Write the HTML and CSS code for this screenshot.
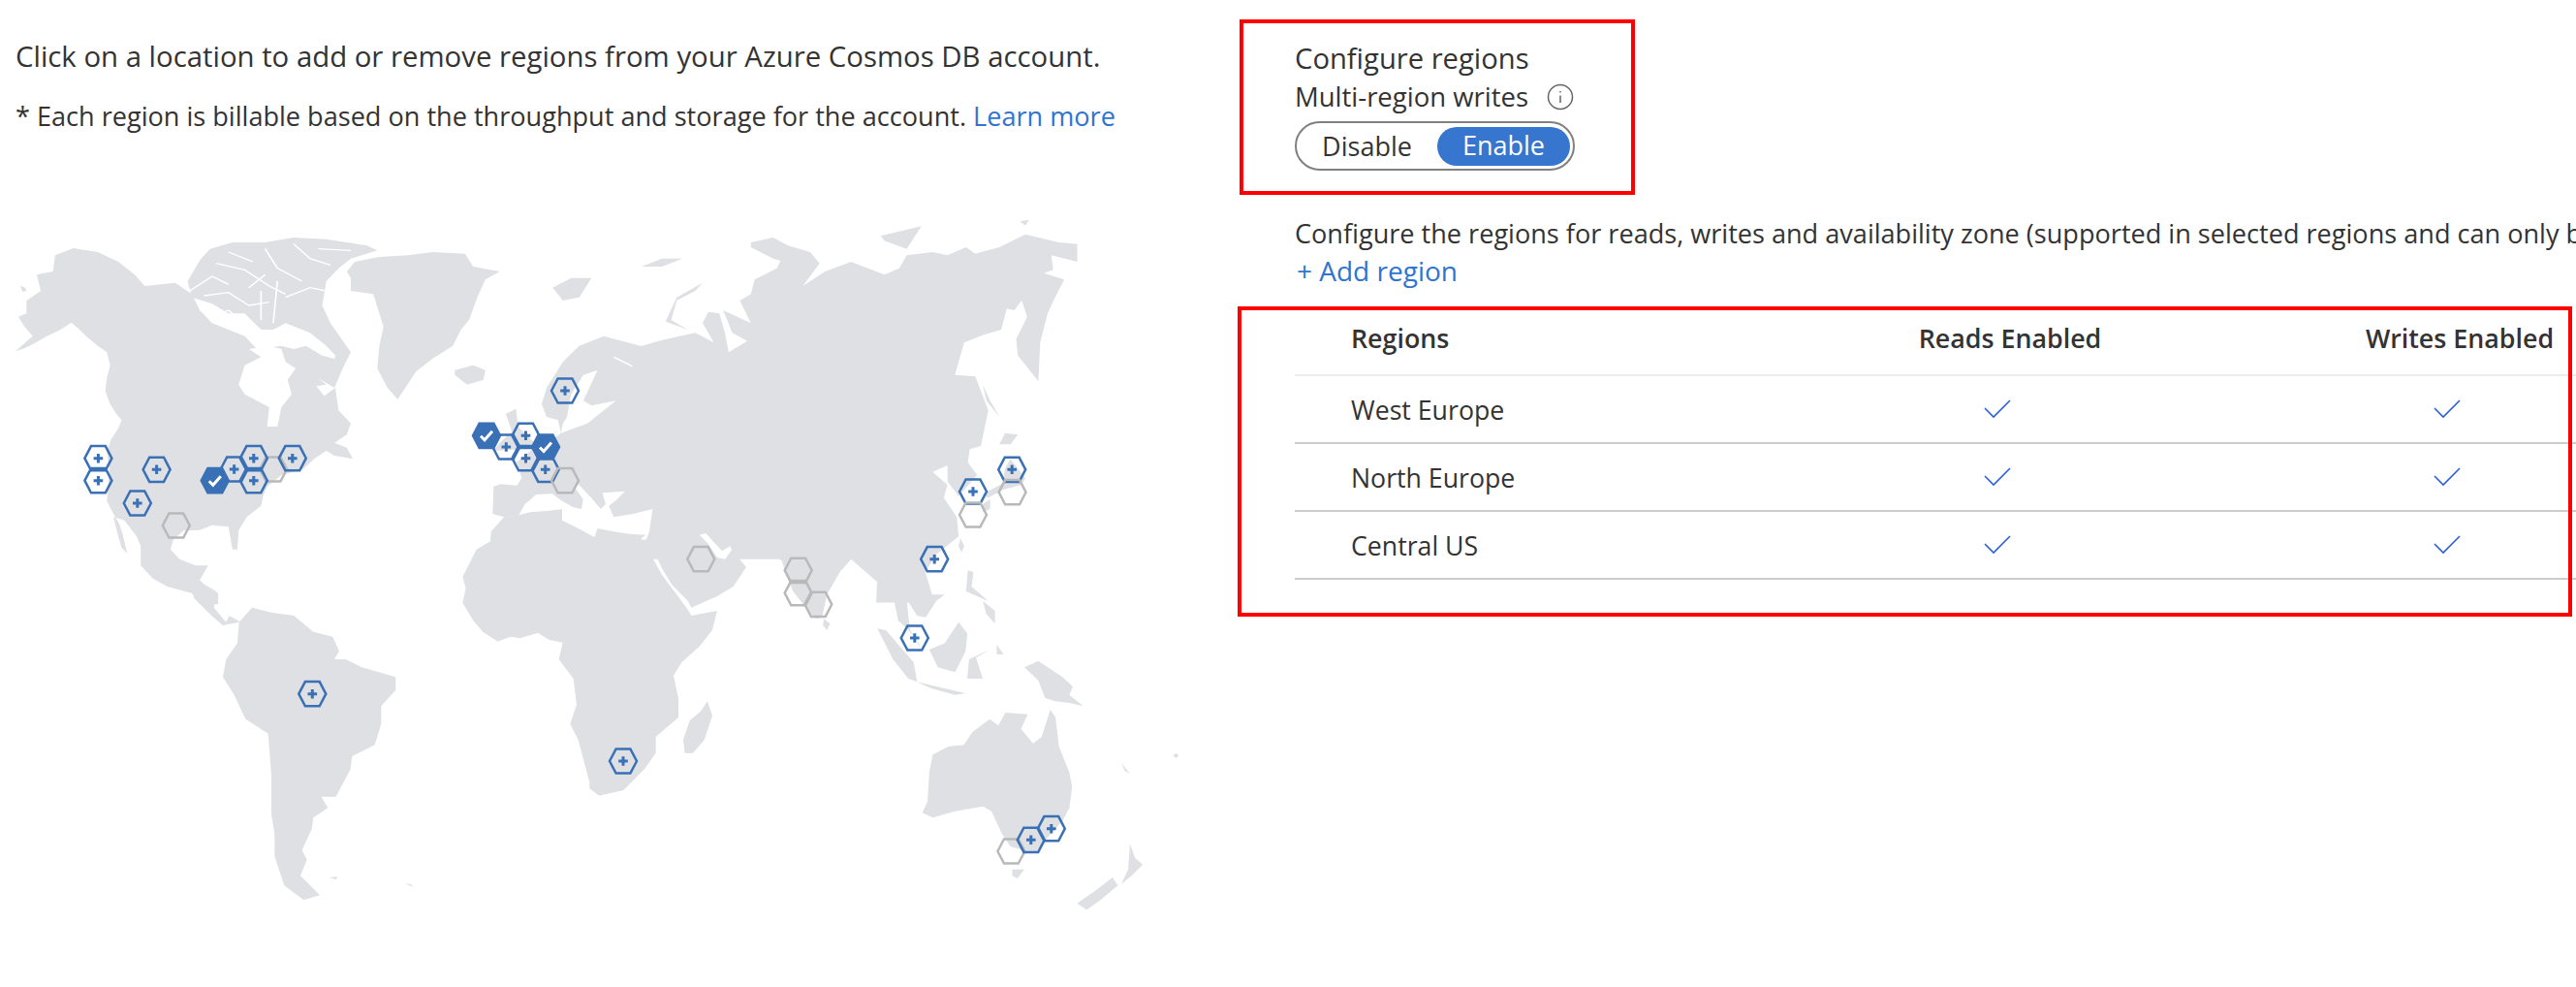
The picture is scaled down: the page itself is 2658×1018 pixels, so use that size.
FILE: index.html
```html
<!DOCTYPE html>
<html lang="en">
<head>
<meta charset="utf-8">
<title>Replicate data globally</title>
<link rel="stylesheet" href="styles.css">
</head>
<body>
<div class="page">
  <section class="left">
    <div class="intro">
      <p class="intro-line first">Click on a location to add or remove regions from your Azure Cosmos DB account.</p>
      <p class="intro-line second">* Each region is billable based on the throughput and storage for the account. <a class="link">Learn more</a></p>
    </div>
    <svg class="map" viewBox="0 200 1280 770" width="1280" height="770" aria-label="World map">
      <defs>
        <polygon id="hex" points="-14,0 -7.4,-12.6 7.4,-12.6 14,0 7.4,12.6 -7.4,12.6"/>
        <g id="plus" class="mk-plus"><use href="#hex"/><path class="mk-cross" d="M-4.8,0H4.8M0,-4.8V4.8"/></g>
        <g id="on" class="mk-on"><use href="#hex"/><path class="mk-check" d="M-6,.5L-2,4.5L6,-4.5"/></g>
        <use id="off" class="mk-off" href="#hex"/>
      </defs>

      <g transform="translate(0,200) scale(.4209,.3333)">
        <polygon class="land" points="38,487 60,478 85,462 115,440 145,422 175,398 195,420 215,445 240,470 262,490 270,530 262,570 258,610 270,650 285,680 298,700 290,725 272,760 262,800 268,850 265,900 262,950 278,990 292,1020 300,1050 312,1112 298,1095 288,1050 278,1000 305,1010 335,1060 345,1090 345,1150 375,1190 410,1215 470,1235 490,1270 535,1270 535,1235 505,1215 490,1195 510,1150 480,1150 440,1130 418,1100 425,1070 450,1042 490,1040 520,1025 560,1030 570,1100 582,1100 585,1040 605,1000 640,965 645,935 655,905 690,870 720,860 745,850 770,820 800,795 820,810 865,820 850,785 820,770 850,745 860,710 830,670 822,600 795,625 775,595 800,590 780,570 820,600 840,540 860,490 830,470 820,510 790,500 750,470 720,480 690,470 630,480 600,440 560,420 520,400 490,360 470,310 430,275 355,285 330,250 290,210 240,180 180,168 135,190 130,240 90,250 100,300 65,330 65,370 45,380 60,410 80,440"/>
        <polygon class="water" points="610,480 640,505 600,530 585,590 600,620 660,660 655,720 680,720 690,660 715,620 705,575 725,540 700,520 690,480 660,470"/>
        <polygon class="land" points="460,270 490,205 515,170 570,150 650,150 720,135 800,140 900,160 925,175 860,200 830,230 800,270 790,345 810,400 860,490 830,510 800,470 760,430 700,400 670,420 640,420 600,370 560,370 520,340 470,320"/>
        <polygon class="land" points="50,285 62,290 65,300 55,303"/>
        <path class="strait" d="M465,300L520,255L560,280M490,360L530,375L560,360L600,400L640,420M500,315L560,305L610,345L660,335M530,215L600,235L660,285L700,310M560,180L620,210M650,170L680,230L740,270M720,155L760,200L810,220M680,270L670,400M700,320L760,290L800,300M640,300L640,390M780,170L860,175M610,290L650,250M670,420L700,450"/>
        <polygon class="land" points="850,240 870,210 930,195 1000,190 1060,180 1140,185 1160,225 1225,240 1190,265 1170,320 1150,390 1130,420 1110,470 1060,510 1020,550 975,635 950,600 925,540 930,470 940,410 925,350 915,310 860,300 860,260"/>
        <polygon class="land" points="1115,545 1160,530 1190,545 1185,575 1145,590 1115,560"/>
        <polygon class="land" points="1355,290 1400,260 1450,260 1420,320 1380,330"/>
        <polygon class="land" points="1240,680 1265,665 1270,720 1310,770 1280,790 1210,795 1225,770 1255,735"/>
        <polygon class="land" points="1267,831 1290,810 1310,780 1345,770 1375,740 1368,700 1340,690 1328,650 1340,600 1380,520 1420,470 1480,440 1570,470 1650,470 1650,900 1300,900"/>
        <polygon class="water" points="1375,740 1440,710 1510,640 1450,655 1430,640 1465,545 1430,560 1400,620 1390,690 1380,710"/>
        <path class="strait" d="M1505,505L1568,545"/>
      </g>

      <g transform="translate(660,200) scale(.3827,.3333)">
        <polygon class="land" points="-20,480 50,455 90,445 150,430 200,460 170,400 185,365 215,370 230,430 240,490 290,455 250,430 225,360 300,400 270,330 300,310 310,265 370,230 400,160 460,180 485,215 440,285 500,240 570,210 660,250 700,230 720,190 790,180 830,190 880,165 905,185 970,165 1040,125 1130,150 1180,155 1180,210 1110,190 1115,235 1090,245 1145,265 1120,320 1100,370 1080,460 1075,580 1020,500 1015,450 1045,380 1030,330 1010,360 990,355 975,420 930,435 875,460 850,560 905,565 940,670 920,780 890,790 885,830 910,870 860,935 830,890 830,840 790,860 830,900 820,940 855,1000 860,1060 800,1115 770,1170 795,1265 638,1265 640,1200 570,1130 -20,1130"/>
        <polygon class="land" points="925,590 945,640 985,720 970,690 935,640"/>
        <polygon class="land" points="985,740 1020,745 1000,775 970,775"/>
        <polygon class="land" points="1000,820 1040,880 1030,900 980,915 940,940 925,930 980,895 985,850"/>
        <polygon class="land" points="925,960 945,945 945,975 925,985"/>
        <polygon class="land" points="865,1065 875,1090 868,1110 860,1090"/>
        <polygon class="land" points="885,1165 900,1170 895,1215 940,1260 880,1230"/>
        <polygon class="land" points="170,275 100,320 70,395 130,420 85,390 100,330 150,300"/>
        <polygon class="land" points="5,225 60,200 115,200 60,225"/>
        <polygon class="land" points="300,150 360,135 400,160 390,210 360,200 300,165"/>
        <polygon class="land" points="650,130 760,100 720,170 660,145"/>
        <polygon class="land" points="1025,85 1050,80 1040,98"/>
      </g>

      <g transform="translate(420,480) scale(.3333)">
        <polygon class="land" points="268,65 290,58 340,62 355,40 340,-10 400,-60 1500,-60 1500,370 1460,360 1420,290 1375,290 1340,330 1300,400 1285,470 1265,475 1235,440 1195,390 1175,340 1160,295 1110,265 1005,260 1050,315 1010,375 960,405 880,440 870,420 820,370 790,320 750,235 745,205 500,225 300,160 265,150"/>
        <polygon class="water" points="300,160 345,155 365,120 400,90 450,88 480,110 515,130 540,135 545,105 520,70 530,58 570,100 600,135 615,120 605,85 675,80 650,105 625,125 640,160 700,150 760,135 750,205 740,230 480,230 480,160"/>
        <polygon class="water" points="905,215 925,210 975,265 1000,250 1005,262 985,290 960,285 930,240"/>
        <polygon class="land" points="300,160 260,205 258,235 215,260 195,300 172,345 182,380 172,425 205,480 235,515 280,545 320,530 350,535 405,518 440,540 482,548 470,600 515,660 525,740 505,800 530,850 565,980 565,1000 595,1022 670,1005 735,940 770,890 770,840 840,780 840,720 825,650 850,610 905,560 945,510 960,450 880,465 865,440 790,340 725,225 740,215 690,212 640,205 590,195 580,222 530,195 480,170 480,135 440,140 380,145 340,155"/>
        <polygon class="land" points="930,730 945,775 920,850 885,890 860,890 855,850 875,790 910,760"/>
        <polygon class="land" points="1290,475 1310,490 1300,510 1288,495"/>
      </g>

      <g transform="translate(200,600) scale(.3333)">
        <polygon class="land" points="0,-10 70,30 62,80 100,125 110,105 145,125 140,125 90,135 55,105 0,50"/>
        <polygon class="land" points="140,125 180,80 240,95 310,105 370,155 430,170 450,215 435,240 470,240 520,265 625,295 625,335 580,385 580,440 560,505 490,540 485,580 440,665 395,665 415,700 370,730 365,765 335,830 350,860 330,910 390,970 340,985 280,940 250,850 250,780 240,720 240,600 230,470 160,425 125,350 90,295 100,240 135,190"/>
        <polygon class="land" points="420,915 445,913 440,922"/>
        <polygon class="land" points="655,935 670,935 680,945"/>
      </g>

      <g transform="translate(700,620) scale(.357,.3333)">
        <polygon class="land" points="620,-20 635,60 665,90 695,130 700,150 690,125 670,90 665,50 660,-5 690,45 715,50 745,0 770,-20"/>
        <polygon class="land" points="575,85 600,90 640,140 680,190 690,250 665,240 620,180"/>
        <polygon class="land" points="690,250 770,270 830,285 800,290 730,270"/>
        <polygon class="land" points="725,150 770,130 810,65 835,100 830,155 800,220 750,205"/>
        <polygon class="land" points="840,180 900,150 860,175 880,240 835,240"/>
        <polygon class="land" points="880,0 915,30 915,70 890,40"/>
        <polygon class="land" points="920,135 940,165 920,165"/>
        <polygon class="land" points="1000,205 1040,185 1110,235 1140,265 1130,290 1170,325 1130,315 1090,310 1060,300 1040,245"/>
        <polygon class="land" points="705,655 720,620 725,530 735,475 780,450 825,445 850,405 900,365 925,385 945,345 1010,350 990,395 1025,440 1050,420 1075,335 1090,360 1100,450 1130,530 1138,575 1130,640 1110,680 1060,740 1030,780 960,760 935,720 905,650 880,635 800,650 735,670"/>
        <polygon class="land" points="965,830 1000,830 980,858 965,850"/>
        <polygon class="land" points="1152,935 1200,900 1255,855 1270,880 1220,925 1180,955"/>
        <polygon class="land" points="1280,875 1300,830 1305,750 1320,795 1342,815 1310,850"/>
        <polygon class="land" points="1280,500 1305,535 1290,525"/>
        <polygon class="land" points="1430,478 1438,470 1447,478 1438,486"/>
      </g>

      <use href="#off" x="282" y="484"/>
      <use href="#off" x="181.8" y="542"/>
      <use href="#plus" x="101.4" y="472.7"/>
      <use href="#plus" x="101.4" y="495.7"/>
      <use href="#plus" x="161.6" y="484.3"/>
      <use href="#plus" x="141.8" y="519"/>
      <use href="#on" x="221.8" y="495.7"/>
      <use href="#plus" x="241.6" y="484"/>
      <use href="#plus" x="261.8" y="472.7"/>
      <use href="#plus" x="261.8" y="495.7"/>
      <use href="#plus" x="301.8" y="472.7"/>
      <use href="#plus" x="583" y="403"/>
      <use href="#on" x="502" y="449.3"/>
      <use href="#plus" x="522.3" y="461"/>
      <use href="#plus" x="542.5" y="449.3"/>
      <use href="#plus" x="542.5" y="472.7"/>
      <use href="#plus" x="562.7" y="484.3"/>
      <use href="#on" x="563" y="461"/>
      <use href="#off" x="583" y="495.7"/>
      <use href="#off" x="723.3" y="576.7"/>
      <use href="#off" x="823.7" y="588.3"/>
      <use href="#off" x="823.7" y="611.7"/>
      <use href="#off" x="844.3" y="623.3"/>
      <use href="#plus" x="1044.2" y="484.3"/>
      <use href="#off" x="1044.6" y="507.7"/>
      <use href="#plus" x="1004" y="507"/>
      <use href="#off" x="1004" y="531"/>
      <use href="#plus" x="964.2" y="576.7"/>
      <use href="#plus" x="943.8" y="658"/>
      <use href="#plus" x="322.3" y="715.7"/>
      <use href="#plus" x="643" y="785"/>
      <use href="#off" x="1043.4" y="878"/>
      <use href="#plus" x="1063.8" y="866.3"/>
      <use href="#plus" x="1084.8" y="854.7"/>
    </svg>
  </section>

  <section class="right">
    <h2 class="config-title">Configure regions</h2>
    <div class="config-label">
      <span>Multi-region writes</span>
      <svg class="info" viewBox="0 0 28 28" width="28" height="28"><circle cx="14" cy="14" r="12.5"/><path d="M14,12.5V20M14,8V9.6"/></svg>
    </div>
    <div class="toggle">
      <span class="toggle-off">Disable</span>
      <span class="toggle-on">Enable</span>
    </div>
    <p class="desc">Configure the regions for reads, writes and availability zone (supported in selected regions and can only be enabled when adding a new region).</p>
    <a class="add">+ Add region</a>
    <div class="table">
      <div class="row head">
        <span class="name">Regions</span><span class="col">Reads Enabled</span><span class="col">Writes Enabled</span>
      </div>
      <div class="row">
        <span class="name">West Europe</span>
        <span class="col"><svg class="check" viewBox="0 0 28 20" width="28" height="20"><path d="M1,9L10,18L27,1"/></svg></span>
        <span class="col"><svg class="check" viewBox="0 0 28 20" width="28" height="20"><path d="M1,9L10,18L27,1"/></svg></span>
      </div>
      <div class="row">
        <span class="name">North Europe</span>
        <span class="col"><svg class="check" viewBox="0 0 28 20" width="28" height="20"><path d="M1,9L10,18L27,1"/></svg></span>
        <span class="col"><svg class="check" viewBox="0 0 28 20" width="28" height="20"><path d="M1,9L10,18L27,1"/></svg></span>
      </div>
      <div class="row">
        <span class="name">Central US</span>
        <span class="col"><svg class="check" viewBox="0 0 28 20" width="28" height="20"><path d="M1,9L10,18L27,1"/></svg></span>
        <span class="col"><svg class="check" viewBox="0 0 28 20" width="28" height="20"><path d="M1,9L10,18L27,1"/></svg></span>
      </div>
    </div>
  </section>

  <div class="callout callout-config"></div>
  <div class="callout callout-table"></div>
</div>
</body>
</html>
```

FILE: styles.css
```css
* { box-sizing: border-box; }
html, body { margin: 0; padding: 0; background: #fff; }
body { font-family: "Open Sans", "Noto Sans", sans-serif; color: #333333; }

.page {
  position: relative;
  display: flex;
  width: 2658px;
  height: 1018px;
  overflow: hidden;
  font-size: 27px;
  line-height: 39px;
}

.left { flex: none; width: 1336px; }
.intro { height: 200px; padding: 39px 0 0 16px; }
.intro-line { margin: 0; white-space: nowrap; }
.intro-line.first { font-size: 29.35px; }
.intro-line.second { margin-top: 22px; font-size: 27.1px; }
.link, .add { color: #2f74d0; }

.map { display: block; }
.land { fill: #dee0e4; }
.water { fill: #fff; }
.strait { fill: none; stroke: #fff; stroke-width: 4; }
.mk-plus use, .mk-off { fill: none; stroke-width: 2.5; }
.mk-plus use { stroke: #3a70b5; }
.mk-off { stroke: #b9b9b9; }
.mk-cross { fill: none; stroke: #3a70b5; stroke-width: 3; }
.mk-on use { fill: #3a70b5; stroke: #3a70b5; stroke-width: 2.5; }
.mk-check { fill: none; stroke: #fff; stroke-width: 3; }

.right { flex: 1; min-width: 0; padding-top: 41px; }
.config-title { margin: 0; font: inherit; font-size: 29.2px; }
.config-label { display: flex; align-items: center; gap: 19px; font-size: 27.5px; }
.info { fill: none; stroke: #666; stroke-width: 1.5; }

.toggle {
  display: flex;
  align-items: center;
  width: 289px;
  height: 51px;
  margin-top: 6px;
  border: 2px solid #808080;
  border-radius: 26px;
}
.toggle-off { width: 145px; text-align: center; }
.toggle-on {
  width: 137px;
  height: 40px;
  line-height: 38px;
  border-radius: 20px;
  background: #3676cf;
  color: #fff;
  text-align: center;
}

.desc { margin: 45px 0 0; white-space: nowrap; font-size: 27.1px; }
.add { display: block; padding-left: 2px; font-size: 28px; }

.table { margin-top: 12px; font-size: 26.7px; }
.row {
  display: grid;
  grid-template-columns: 506px 464px 464px;
  align-items: center;
  height: 70px;
  border-bottom: 2px solid #cccccc;
}
.row.head { height: 77px; border-bottom-color: #ededed; font-size: 26.8px; font-weight: 600; }
.name { padding-left: 58px; }
.col { display: flex; justify-content: center; white-space: nowrap; }
.check { margin-right: 27px; fill: none; stroke: #2b5fd4; stroke-width: 1.6; }

.callout { position: absolute; border: 4px solid #ff0000; pointer-events: none; }
.callout-config { left: 1279px; top: 20px; width: 408px; height: 181px; }
.callout-table { left: 1277px; top: 316px; width: 1377px; height: 320px; }
```
